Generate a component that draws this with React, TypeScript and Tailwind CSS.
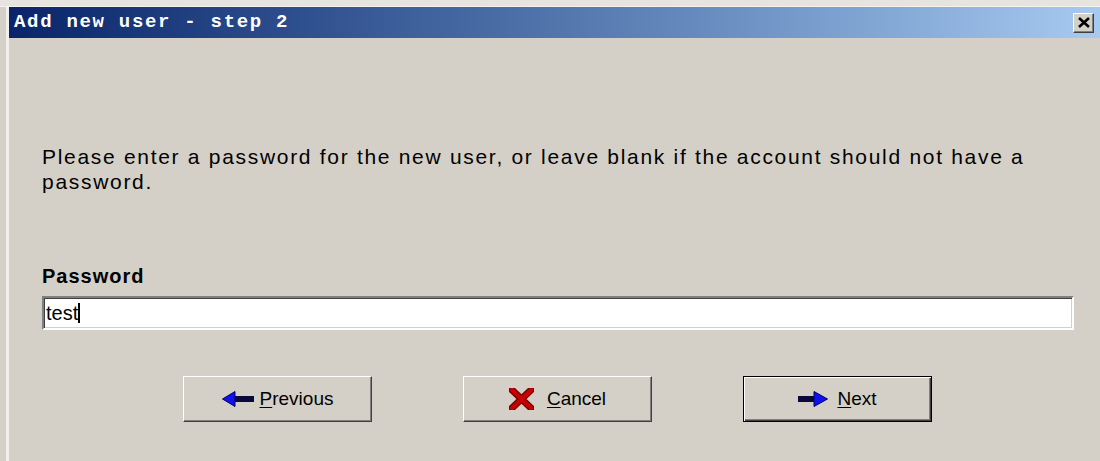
import React from "react";

function ArrowLeft() {
  return (
    <svg width="32" height="16" viewBox="0 0 32 16">
      <rect x="11" y="5" width="21" height="6" fill="#0a0a3a" />
      <polygon points="0.5,8 13,0.5 13,15.5" fill="#1010f0" stroke="#000060" strokeWidth="1" />
    </svg>
  );
}

function ArrowRight() {
  return (
    <svg width="30" height="16" viewBox="0 0 30 16">
      <rect x="0" y="5" width="17" height="6" fill="#0a0a3a" />
      <polygon points="29.5,8 16,0.5 16,15.5" fill="#1010f0" stroke="#000060" strokeWidth="1" />
    </svg>
  );
}

function RedCross() {
  return (
    <svg width="25" height="22" viewBox="0 0 25 22">
      <path d="M3 2 L22 20 M22 2 L3 20" stroke="#7a0000" strokeWidth="7" strokeLinecap="round" />
      <path d="M3 2 L22 20 M22 2 L3 20" stroke="#c80000" strokeWidth="4" strokeLinecap="round" />
    </svg>
  );
}

function Button({
  icon,
  mnemonic,
  rest,
  gap,
  isDefault,
}: {
  icon: React.ReactNode;
  mnemonic: string;
  rest: string;
  gap: string;
  isDefault?: boolean;
}) {
  const frame = isDefault
    ? "border border-black shadow-[inset_1px_1px_#ffffff,inset_-1px_-1px_#404040,inset_-2px_-2px_#808080]"
    : "border border-t-white border-l-white border-r-[#404040] border-b-[#404040] shadow-[inset_-1px_-1px_#808080]";
  return (
    <button
      className={`flex h-[46px] w-[189px] items-center justify-center bg-[#d4d0c8] text-[19px] text-black ${gap} ${frame}`}
    >
      {icon}
      <span>
        <span className="underline underline-offset-2">{mnemonic}</span>
        {rest}
      </span>
    </button>
  );
}

export default function App() {
  return (
    <div className="flex h-[461px] w-[1100px] flex-col overflow-hidden bg-[#d4d0c8] font-['Liberation_Sans',Arial,sans-serif]">
      <div className="h-[7px] border-b border-b-[#f4f3f0] bg-[#e6e4df]" />
      <div className="flex flex-1">
        <div className="w-[6px]" />
        <div className="flex flex-1 flex-col border-l-[3px] border-l-[#f1f0ec]">
          {/* title bar */}
          <div className="flex h-[31px] items-center justify-between bg-gradient-to-r from-[#0a246a] to-[#a6caf0] pr-[6px] pl-[5px]">
            <span className="font-['Liberation_Mono',monospace] text-[19px] font-bold tracking-[1.7px] text-white">
              Add new user - step 2
            </span>
            <div className="flex h-[20px] w-[21px] items-center justify-center border border-t-white border-l-white border-r-[#404040] border-b-[#404040] bg-[#d4d0c8] shadow-[inset_-1px_-1px_#808080]">
              <svg width="12" height="11" viewBox="0 0 12 11">
                <path d="M1 1 L11 10 M11 1 L1 10" stroke="#000" strokeWidth="2.6" />
              </svg>
            </div>
          </div>

          <div className="flex flex-col pl-[33px] pr-[26px]">
            <p className="mt-[106px] text-[21px] leading-[25px] tracking-[1.7px] text-black">
              Please enter a password for the new user, or leave blank if the account should not have a password.
            </p>

            <label className="mt-[70px] text-[20px] font-bold leading-[24px] tracking-[1px] text-black">
              Password
            </label>
            <div className="mt-[8px] flex h-[34px] items-center border-2 border-t-[#808080] border-l-[#808080] border-r-white border-b-white bg-white pl-[2px] shadow-[inset_1px_1px_#404040,inset_-1px_-1px_#d4d0c8]">
              <span className="text-[20px] text-black">test</span>
              <span className="h-[20px] w-[2px] bg-black" />
            </div>

            <div className="mt-[46px] flex gap-[91px] pl-[141px]">
              <Button icon={<ArrowLeft />} mnemonic="P" rest="revious" gap="gap-[6px]" />
              <Button icon={<RedCross />} mnemonic="C" rest="ancel" gap="gap-[13px]" />
              <Button icon={<ArrowRight />} mnemonic="N" rest="ext" gap="gap-[9px]" isDefault />
            </div>
          </div>
        </div>
      </div>
    </div>
  );
}
